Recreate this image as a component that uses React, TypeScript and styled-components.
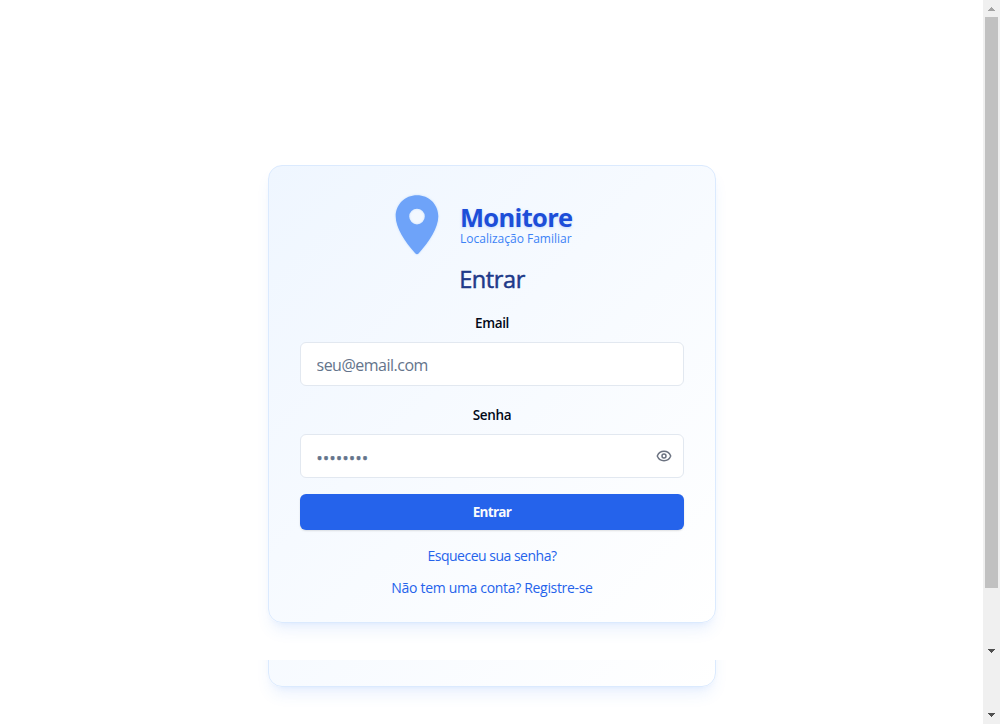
import React from 'react';
import styled, { createGlobalStyle } from 'styled-components';

const GlobalStyle = createGlobalStyle`
  *, *::before, *::after { box-sizing: border-box; }
  body { margin: 0; background: #fff; overflow: hidden; font-family: "Open Sans", "Noto Sans", sans-serif; }
`;

const Screen = styled.div`
  display: flex;
  width: 100%;
  height: 100vh;
  overflow: hidden;
`;

const Content = styled.main`
  flex: 1;
  display: flex;
  flex-direction: column;
`;

const Stage = styled.section`
  flex: 0 0 660px;
  padding-top: 165px;
  display: flex;
  justify-content: center;
  align-items: flex-start;
  overflow: hidden;
`;

const Tail = styled.section`
  flex: 1;
  display: flex;
  justify-content: center;
  align-items: flex-start;
  overflow: hidden;
`;

const Card = styled.div<{ $lift?: number }>`
  flex: none;
  width: 448px;
  height: 458px;
  margin: ${p => -(p.$lift ?? 0)}px 0 0 1px;
  padding: 28px 31px;
  display: flex;
  flex-direction: column;
  border: 1px solid #dbeafe;
  border-radius: 14px;
  background: linear-gradient(135deg, #eff6ff, #ffffff);
  box-shadow: 0 10px 15px -3px rgba(59, 130, 246, .1), 0 4px 6px -4px rgba(59, 130, 246, .1);
`;

const Brand = styled.header`
  display: flex;
  height: 64px;
  padding-left: 92px;
  gap: 18px;
`;

const Pin = styled.svg`
  width: 50px;
  height: 64px;
  flex: none;
  filter: drop-shadow(0 0 1px rgba(96, 165, 250, .3));
`;

const BrandText = styled.div`
  display: flex;
  flex-direction: column;
  padding-top: 10px;
  white-space: nowrap;
`;

const Name = styled.span`
  height: 27px;
  font-size: 25.5px;
  line-height: 26px;
  font-weight: 700;
  letter-spacing: -.68px;
  color: #1d4ed8;
  text-shadow: 0 1px 3px rgba(96, 165, 250, .35);
`;

const Tagline = styled.span`
  height: 16px;
  font-size: 12px;
  line-height: 16px;
  color: #3b82f6;
`;

const Title = styled.h1`
  margin: 5px 0 0;
  height: 32px;
  line-height: 32px;
  font-size: 23.5px;
  font-weight: 400;
  letter-spacing: -.4px;
  text-align: center;
  color: #1e3a8a;
  -webkit-text-stroke: .5px #1e3a8a;
`;

const Form = styled.form`
  display: flex;
  flex-direction: column;
`;

const Label = styled.label<{ $top: number }>`
  margin-top: ${p => p.$top}px;
  height: 20px;
  line-height: 20px;
  font-size: 13.5px;
  font-weight: 600;
  letter-spacing: -.35px;
  text-align: center;
  color: #020817;
`;

const Field = styled.div`
  margin-top: 9px;
  height: 44px;
  display: flex;
  align-items: center;
  padding: 0 11px 0 15px;
  border: 1px solid #e2e8f0;
  border-radius: 6px;
  background: #fff;
`;

const Input = styled.input<{ $spacing: number; $secret?: boolean }>`
  flex: 1;
  min-width: 0;
  padding: ${p => (p.$secret ? '4px 0 0 .5px' : '2px 0 0 .5px')};
  border: 0;
  outline: 0;
  background: transparent;
  font: 400 16px/24px "Open Sans", "Noto Sans", sans-serif;
  letter-spacing: ${p => p.$spacing}px;
  &::placeholder {
    color: #64748b;
    opacity: 1;
    -webkit-text-stroke: ${p => (p.$secret ? '.5px #64748b' : '0')};
  }
`;

const Eye = styled.svg`
  width: 16px;
  height: 16px;
  flex: none;
`;

const Submit = styled.button`
  margin-top: 16px;
  height: 36px;
  border: 0;
  border-radius: 6px;
  background: #2563eb;
  color: #f8fafc;
  font: 700 13.5px/20px "Open Sans", "Noto Sans", sans-serif;
  letter-spacing: -.7px;
  box-shadow: 0 1px 2px rgba(0, 0, 0, .12);
`;

const Links = styled.nav`
  margin-top: 16px;
  display: flex;
  flex-direction: column;
  align-items: center;
  gap: 12px;
`;

const TextLink = styled.a<{ $spacing: number }>`
  height: 20px;
  line-height: 20px;
  font-size: 14px;
  letter-spacing: ${p => p.$spacing}px;
  white-space: nowrap;
  color: #2563eb;
`;

const Scrollbar = styled.aside`
  width: 17px;
  display: flex;
  flex-direction: column;
  align-items: center;
  background: #f0f0f0;
`;

const Thumb = styled.div`
  width: 13px;
  height: 571px;
  background: #c1c1c1;
`;

const Arrow = styled.svg<{ $before?: number; $after?: number }>`
  width: 7px;
  height: 4px;
  flex: none;
  margin: ${p => p.$before ?? 0}px 0 ${p => p.$after ?? 0}px;
`;

export default function App() {
  return (
    <Screen>
      <GlobalStyle />
      <Content>
        <Stage>
          <Card>
            <Brand>
              <Pin viewBox="0 0 50 64">
                <path
                  fill="#6ea3f9"
                  fillRule="evenodd"
                  d="M25 1.2C13 1.2 3.7 10.4 3.7 22.2C3.7 34 12.8 47.4 23.2 59.2Q25 61.2 26.8 59.2C37.2 47.4 46.3 34 46.3 22.2C46.3 10.4 37 1.2 25 1.2ZM25 14.8A7.8 7.8 0 1 1 25 30.4A7.8 7.8 0 1 1 25 14.8Z"
                />
              </Pin>
              <BrandText>
                <Name>Monitore</Name>
                <Tagline>Localização Familiar</Tagline>
              </BrandText>
            </Brand>
            <Title>Entrar</Title>
            <Form onSubmit={e => e.preventDefault()}>
              <Label $top={18} htmlFor="email">Email</Label>
              <Field>
                <Input id="email" type="email" placeholder="seu@email.com" $spacing={-0.5} />
              </Field>
              <Label $top={19} htmlFor="password">Senha</Label>
              <Field>
                <Input id="password" type="password" placeholder="••••••••" $spacing={0.5} $secret />
                <Eye viewBox="0 0 24 24" fill="none" stroke="#6b7280" strokeWidth="2.2" strokeLinecap="round" strokeLinejoin="round">
                  <path d="M2.06 12.35a1 1 0 0 1 0-.7 10.75 10.75 0 0 1 19.88 0 1 1 0 0 1 0 .7 10.75 10.75 0 0 1-19.88 0" />
                  <circle cx="12" cy="12" r="3" />
                </Eye>
              </Field>
              <Submit type="submit">Entrar</Submit>
            </Form>
            <Links>
              <TextLink $spacing={-0.5}>Esqueceu sua senha?</TextLink>
              <TextLink $spacing={-0.32}>Não tem uma conta? Registre-se</TextLink>
            </Links>
          </Card>
        </Stage>
        <Tail>
          <Card $lift={431} />
        </Tail>
      </Content>
      <Scrollbar>
        <Arrow viewBox="0 0 7 4" $before={7} $after={6}><path fill="#a3a3a3" d="M3 0h1v1h1v1h1v1h1v1H0V3h1V2h1V1h1z" /></Arrow>
        <Thumb />
        <Arrow viewBox="0 0 7 4" $before={61} $after={60}><path fill="#505050" d="M0 0h7v1H6v1H5v1H4v1H3V3H2V2H1V1H0z" /></Arrow>
        <Arrow viewBox="0 0 7 4"><path fill="#505050" d="M0 0h7v1H6v1H5v1H4v1H3V3H2V2H1V1H0z" /></Arrow>
      </Scrollbar>
    </Screen>
  );
}
